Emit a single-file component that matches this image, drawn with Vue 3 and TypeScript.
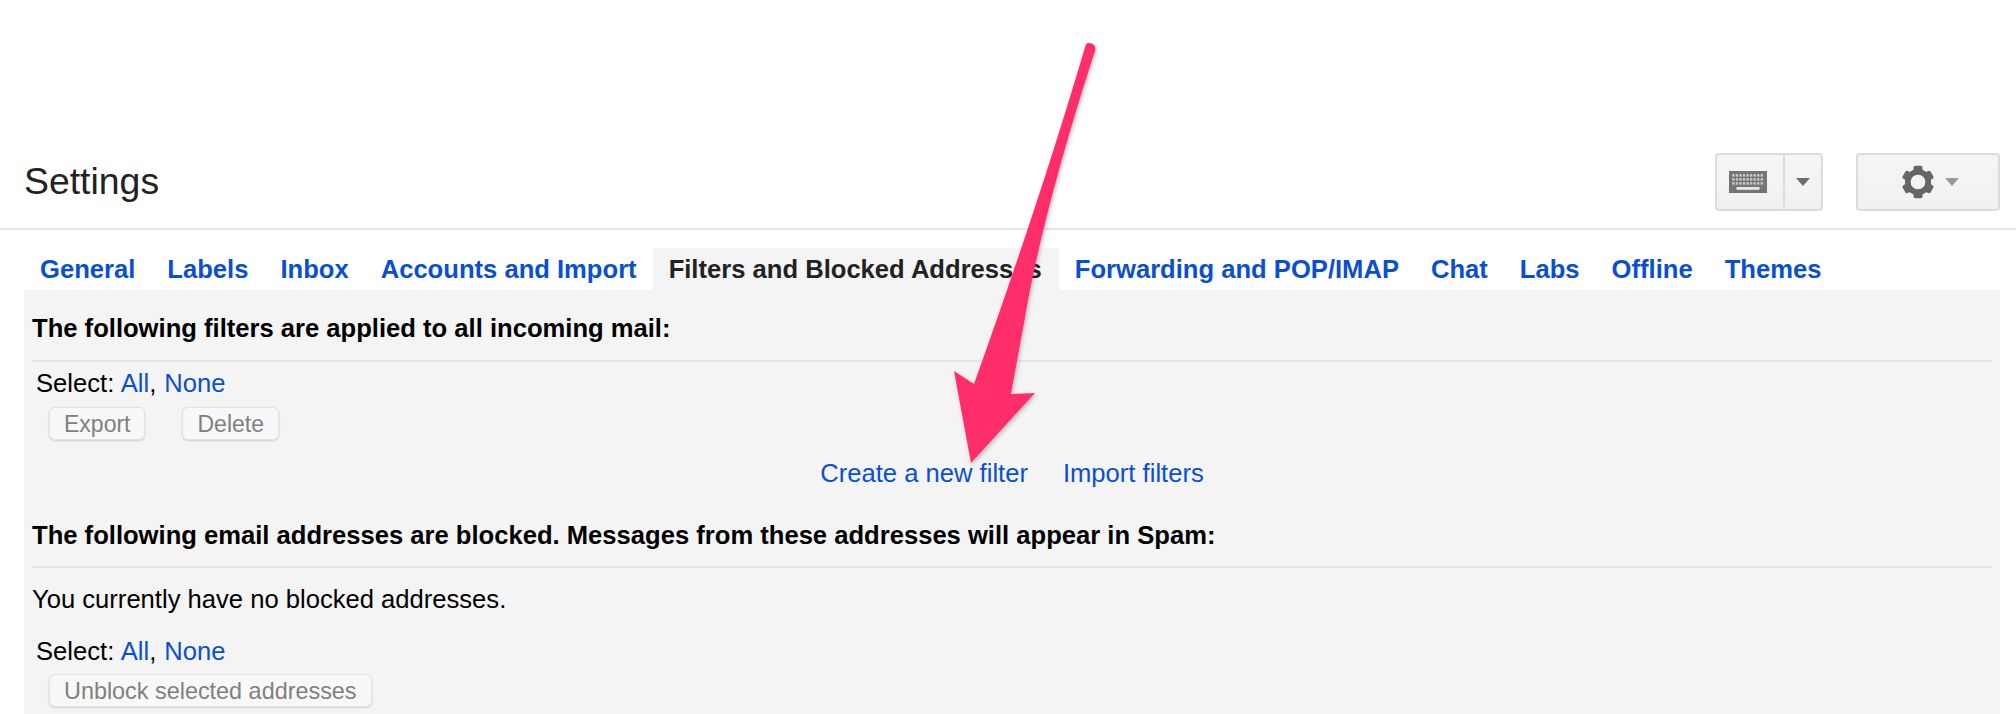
<script setup lang="ts">
const tabs: string[] = ['General', 'Labels', 'Inbox', 'Accounts and Import', 'Filters and Blocked Addresses', 'Forwarding and POP/IMAP', 'Chat', 'Labs', 'Offline', 'Themes']
const activeTab = 'Filters and Blocked Addresses'
const gearTeeth: number[] = [0, 60, 120, 180, 240, 300]
</script>

<template>
  <div class="page">
    <header class="header">
      <h1 class="header__title">Settings</h1>
      <div class="header__tools">
        <div class="tool tool--keyboard">
          <span class="tool__main">
            <svg width="38" height="22" viewBox="0 0 38 22">
              <rect width="38" height="22" fill="#757575" />
              <g fill="#cfcfcf">
                <template v-for="row in 3" :key="row">
                  <rect v-for="col in 9" :key="col" :x="col * 3.55 - 0.3" :y="row * 4 - 0.8" width="2.3" height="2.4" />
                </template>
                <rect x="7.500" y="16" width="23" height="2.800" fill="#e8e8e8" />
              </g>
            </svg>
          </span>
          <span class="tool__caret"><i class="caret caret--dark"></i></span>
        </div>
        <div class="tool tool--settings">
          <svg width="34" height="34" viewBox="0 0 24 24">
            <circle cx="12" cy="12" r="7.2" fill="none" stroke="#666" stroke-width="4" />
            <rect v-for="angle in gearTeeth" :key="angle" x="8.800" y="0.600" width="6.400" height="5" rx="1.400" fill="#666" :transform="`rotate(${angle} 12 12)`" />
          </svg>
          <i class="caret caret--light"></i>
        </div>
      </div>
    </header>

    <nav class="tabs">
      <a v-for="tab in tabs" :key="tab" class="tabs__item" :class="{ 'tabs__item--active': tab === activeTab }">{{ tab }}</a>
    </nav>

    <main class="panel">
      <section class="section section--filters">
        <h2 class="section__title">The following filters are applied to all incoming mail:</h2>
        <p class="select">Select: <a class="link">All</a>, <a class="link">None</a></p>
        <div class="actions">
          <button class="btn">Export</button>
          <button class="btn">Delete</button>
        </div>
        <div class="filter-links">
          <a class="link">Create a new filter</a>
          <a class="link">Import filters</a>
        </div>
      </section>

      <section class="section section--blocked">
        <h2 class="section__title">The following email addresses are blocked. Messages from these addresses will appear in Spam:</h2>
        <p class="empty">You currently have no blocked addresses.</p>
        <p class="select select--blocked">Select: <a class="link">All</a>, <a class="link">None</a></p>
        <div class="actions actions--blocked">
          <button class="btn">Unblock selected addresses</button>
        </div>
      </section>
    </main>

    <svg class="arrow" width="2016" height="714" viewBox="0 0 2016 714">
      <defs>
        <filter id="arrow-shadow" x="-20%" y="-20%" width="140%" height="140%">
          <feDropShadow dx="1" dy="2" stdDeviation="2" flood-color="#000" flood-opacity="0.25" />
        </filter>
      </defs>
      <path filter="url(#arrow-shadow)" fill="#ff2f6b" d="M1086 44 Q1091 41 1095 46 Q1096 50 1094 54 Q1050 190 1030 290 L1011 394 L1035 393 L971 463 L954 371 L974 384 Q1040 200 1086 44 Z" />
    </svg>
  </div>
</template>

<style>
html,
body {
  margin: 0;
  background: #fff;
}
</style>

<style scoped>
.page {
  position: relative;
  width: 2016px;
  height: 714px;
  overflow: hidden;
  font-family: "Liberation Sans", Arial, sans-serif;
  font-size: 25.6px;
  color: #000;
}

.header {
  display: flex;
  justify-content: space-between;
  align-items: center;
  height: 230px;
  box-sizing: border-box;
  padding: 136px 16px 0 24px;
  border-bottom: 2px solid #e5e5e5;
}

.header__title {
  margin: 0 0 2px;
  font-size: 37.4px;
  font-weight: 400;
  color: #222;
}

.header__tools {
  display: flex;
  gap: 33px;
}

.tool {
  display: flex;
  align-items: center;
  justify-content: center;
  height: 58px;
  box-sizing: border-box;
  border: 2px solid #dcdcdc;
  border-radius: 4px;
  background: linear-gradient(#f5f5f5, #f1f1f1);
}

.tool--keyboard {
  width: 108px;
}

.tool--settings {
  width: 144px;
  gap: 10px;
  padding-left: 4px;
}

.tool__main {
  display: flex;
  align-items: center;
  justify-content: center;
  width: 68px;
  height: 100%;
  box-sizing: border-box;
  padding-right: 4px;
  border-right: 2px solid #dcdcdc;
}

.tool__caret {
  display: flex;
  align-items: center;
  justify-content: center;
  flex: 1;
}

.caret {
  width: 0;
  height: 0;
  border-left: 7px solid transparent;
  border-right: 7px solid transparent;
  border-top: 8px solid #6f6f6f;
}

.caret--light {
  border-top-color: #999;
}

.tabs {
  display: flex;
  height: 42px;
  margin-top: 18px;
  padding-left: 24px;
}

.tabs__item {
  padding: 0 16px;
  line-height: 42px;
  font-weight: 700;
  color: #0b4fd1;
  white-space: nowrap;
}

.tabs__item--active {
  padding-right: 17px;
  background: #f4f4f4;
  color: #222;
}

.panel {
  margin: 0 16px 0 24px;
  height: 424px;
  background: #f4f4f4;
}

.section {
  padding: 0 8px;
}

.section__title {
  margin: 0;
  padding: 20px 0 13px;
  border-bottom: 2px solid #e5e5e5;
  font-size: 25.6px;
  font-weight: 700;
  line-height: 37px;
}

.select {
  margin: 0;
  padding: 6px 0 0 4px;
  line-height: 30px;
  word-spacing: 0.8px;
}

.actions {
  display: flex;
  gap: 37px;
  padding: 9px 0 0 17px;
}

.actions--blocked {
  padding-top: 8px;
}

.actions--blocked .btn {
  font-size: 23.4px;
}

.btn {
  height: 33px;
  padding: 1px 14px 0;
  border: 1px solid #e2e2e2;
  border-radius: 6px;
  background: #f8f8f8;
  box-shadow: 0 1px 2px rgba(0, 0, 0, 0.15);
  font-family: inherit;
  font-size: 23px;
  color: #808080;
}

.filter-links {
  display: flex;
  justify-content: center;
  gap: 35px;
  padding: 18px 0 0 0;
  line-height: 30px;
}

.link {
  color: #0b4fd1;
}

.section--blocked {
  padding-top: 8px;
}

.section--blocked .section__title {
  padding: 21px 0 12px;
}

.empty {
  margin: 0;
  padding: 16px 0 0;
  line-height: 30px;
}

.select--blocked {
  padding-top: 22px;
}

.arrow {
  position: absolute;
  inset: 0;
  pointer-events: none;
}
</style>
